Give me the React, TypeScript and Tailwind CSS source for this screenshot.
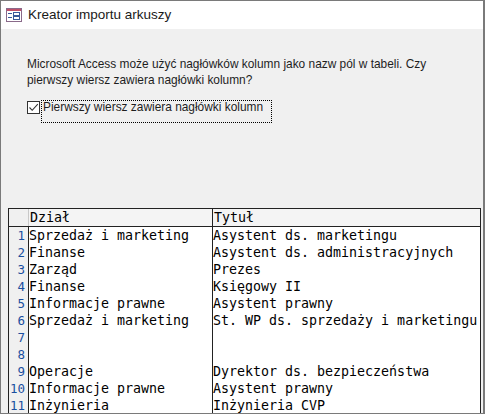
const rows: [string, string][] = [
  ['Sprzedaż i marketing', 'Asystent ds. marketingu'],
  ['Finanse', 'Asystent ds. administracyjnych'],
  ['Zarząd', 'Prezes'],
  ['Finanse', 'Księgowy II'],
  ['Informacje prawne', 'Asystent prawny'],
  ['Sprzedaż i marketing', 'St. WP ds. sprzedaży i marketingu'],
  ['', ''],
  ['', ''],
  ['Operacje', 'Dyrektor ds. bezpieczeństwa'],
  ['Informacje prawne', 'Asystent prawny'],
  ['Inżynieria', 'Inżynieria CVP'],
];

function FormIcon() {
  return (
    <svg width="16" height="14" viewBox="0 0 16 14">
      <rect x="0.5" y="0.5" width="15" height="13" fill="#fff" stroke="#8a6a8a" />
      <rect x="1" y="1" width="14" height="2" fill="#c0506a" />
      <rect x="2" y="5" width="4" height="1" fill="#3a5a9a" />
      <rect x="2" y="9" width="4" height="1" fill="#3a5a9a" />
      <rect x="7.5" y="4.5" width="6" height="3" fill="none" stroke="#3a5a9a" />
      <rect x="7.5" y="8.5" width="6" height="3" fill="none" stroke="#3a5a9a" />
    </svg>
  );
}

export default function App() {
  return (
    <div className="flex h-[414px] w-[485px] flex-col overflow-hidden border-t border-b border-l border-r-2 border-[#7a7a7a] bg-[#f0f0f0] font-['Liberation_Sans',sans-serif] text-black">
      {/* title bar */}
      <div className="flex h-[28px] shrink-0 items-center gap-[6px] bg-white pl-[5px]">
        <FormIcon />
        <span className="text-[13.5px] text-[#1a1a1a]">Kreator importu arkuszy</span>
      </div>

      <div className="pl-[26px] pt-[27px] text-[11.9px] leading-[16px] text-[#1e1e1e]">
        <p>
          Microsoft Access może użyć nagłówków kolumn jako nazw pól w tabeli. Czy
          <br />
          pierwszy wiersz zawiera nagłówki kolumn?
        </p>
        <div className="mt-[12px] flex items-start">
          <span className="mt-[1px] flex h-[13px] w-[13px] shrink-0 items-center justify-center border border-[#333] bg-white">
            <svg width="11" height="11" viewBox="0 0 11 11">
              <path d="M1.5 5.5 L4.2 8.3 L9.8 2.2" fill="none" stroke="#333" strokeWidth="1.1" />
            </svg>
          </span>
          <span className="ml-[1px] h-[23px] w-[231px] border border-dotted border-black pl-[1px] leading-[13px]">
            Pierwszy wiersz zawiera nagłówki kolumn
          </span>
        </div>
      </div>

      {/* preview grid */}
      <div className="mt-[85px] ml-[7px] mr-[2px] flex-1 border-t border-l border-r border-[#222] bg-white font-['DejaVu_Sans_Mono',monospace] text-[13.3px] leading-[17px] text-black">
        <div className="grid grid-cols-[20px_184px_1fr] border-b border-[#222] bg-[#f4f4f4]">
          <div className="h-[17px] border-r border-[#c8c8c8] bg-[#f0f0f0]" />
          <div className="border-r border-[#222] pl-[1px]">Dział</div>
          <div className="pl-[1px]">Tytuł</div>
        </div>
        {rows.map((r, i) => (
          <div key={i} className="grid h-[17px] grid-cols-[20px_184px_1fr]">
            <div className="border-r border-b border-[#222] bg-[#f0f0f0] pr-[3px] text-right text-[12.5px] text-[#1a4fa0]">
              {i + 1}
            </div>
            <div className="border-r border-[#222] whitespace-pre">{r[0]}</div>
            <div className="whitespace-pre">{r[1]}</div>
          </div>
        ))}
      </div>
    </div>
  );
}
